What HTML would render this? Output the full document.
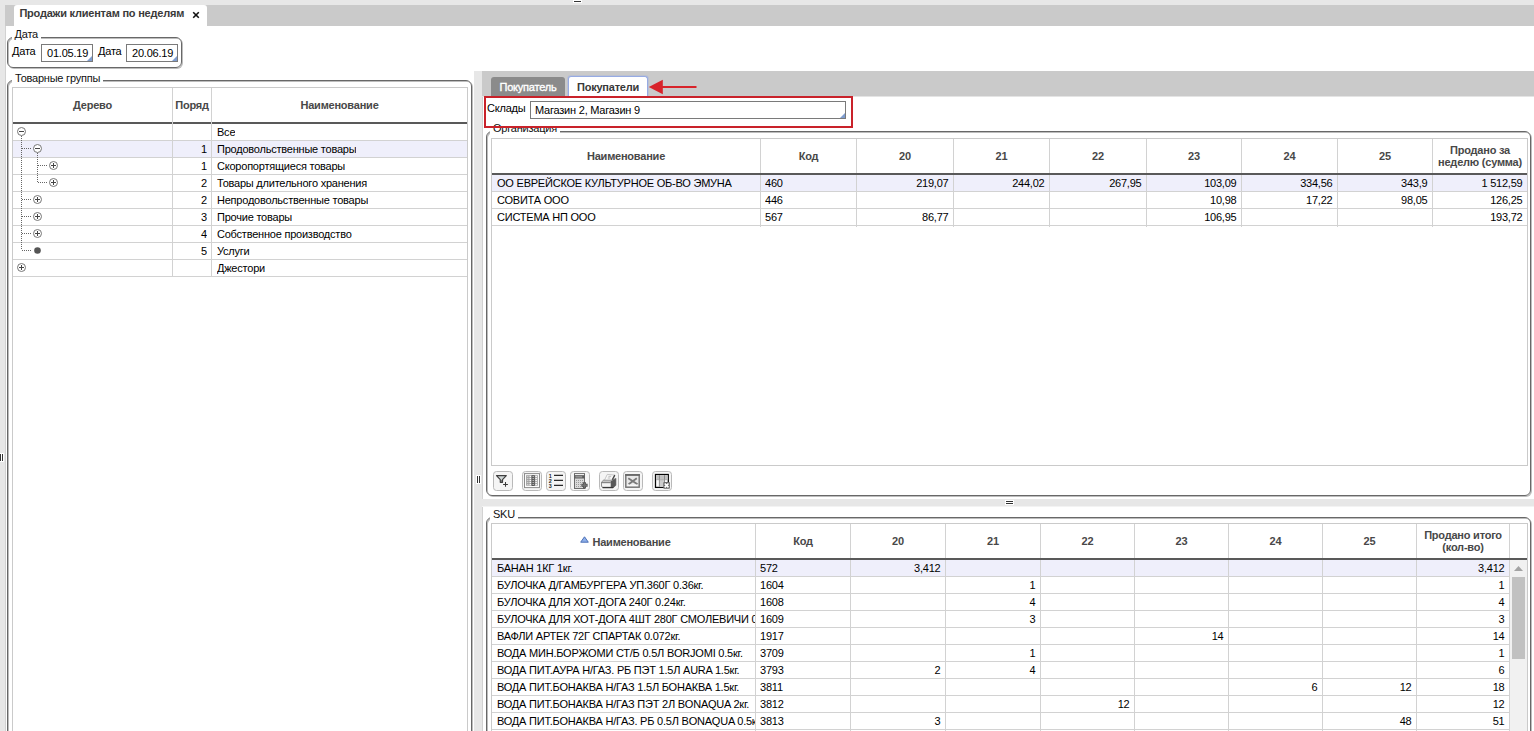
<!DOCTYPE html><html lang="ru"><head><meta charset="utf-8"><title>Продажи клиентам по неделям</title><style>
*{box-sizing:border-box;margin:0;padding:0}
html,body{width:1534px;height:731px;overflow:hidden;background:#e7e7e7}
body{font-family:"Liberation Sans",sans-serif;font-size:11px;color:#000;letter-spacing:-0.22px;position:relative}
.abs,.abs>*{position:absolute}
div{position:absolute;white-space:nowrap}
.fs{border:1px solid #686868;border-radius:6px;box-shadow:1px 1px 0 0 rgba(90,90,90,.4),inset 1px 1px 0 0 rgba(90,90,90,.4)}
.lg{background:#fff;padding:0 3px;font-size:11px;line-height:13px;color:#111}
.grid{border:1px solid #cacaca;background:#fff;overflow:hidden}
.hl{height:1px;background:#d2d2d2;left:0;right:0}
.vl{width:1px;background:#d2d2d2;top:0}
.hb{height:2px;background:#595959;left:0;right:0}
.th{font-weight:bold;color:#484848;text-align:center;font-size:11px;line-height:13px}
.c{line-height:17px;height:17px;overflow:hidden}
.r{text-align:right}
.sel{background:#efeffb;left:0;right:0;height:17px}
.btn{width:20px;height:20px;border:1px solid #b9b9b9;border-radius:3.500px;background:#f5f5f5}
.inp{border:1px solid #7a7a7a;background:#fff;line-height:16px;padding-left:5px;font-size:11px}
.tri{width:0;height:0;border-left:5px solid transparent;border-bottom:5px solid #7f9dcf;right:0;bottom:0}
</style></head><body>
<div style="left:5px;top:5px;width:1529px;height:21px;background:#cacaca"></div>
<div style="left:5px;top:26px;width:1529px;height:705px;background:#fff"></div>
<div style="left:14px;top:5px;width:193px;height:21px;background:#fff;border-radius:3px 3px 0 0"></div>
<div style="left:19.400px;top:7px;font-weight:bold;font-size:11px;line-height:13px;color:#3a3a3a">Продажи клиентам по неделям</div>
<svg style="position:absolute;left:192px;top:11.400px" width="8" height="8" viewBox="0 0 8 8"><path d="M1.200 1.200L6.800 6.800M6.800 1.200L1.200 6.800" stroke="#111" stroke-width="1.600"/></svg>
<div style="left:5px;top:26px;width:1px;height:705px;background:#d2d2d2"></div>
<div class="fs" style="left:7px;top:37px;width:175px;height:31px"></div>
<div class="lg" style="left:11.500px;top:28px">Дата</div>
<div style="left:12px;top:45px;line-height:13px">Дата</div>
<div class="inp" style="left:41px;top:44px;width:52px;height:18px">01.05.19<div class="tri"></div></div>
<div style="left:98px;top:45px;line-height:13px">Дата</div>
<div class="inp" style="left:126px;top:44px;width:52px;height:18px">20.06.19<div class="tri"></div></div>
<div class="fs" style="left:7px;top:80px;width:465px;height:670px"></div>
<div class="lg" style="left:12px;top:72px">Товарные группы</div>
<div class="grid" style="left:12px;top:87px;width:456px;height:660px">
<div class="vl" style="left:159px;height:189px"></div>
<div class="vl" style="left:198px;height:189px"></div>
<div class="th" style="left:0;width:159px;top:11px">Дерево</div>
<div class="th" style="left:160px;width:38px;top:11px">Поряд</div>
<div class="th" style="left:199px;width:255px;top:11px">Наименование</div>
<div class="hb" style="top:34px"></div>
<div class="hl" style="top:52px"></div>
<div class="c r" style="left:160px;width:34px;top:36px"></div>
<div class="c" style="left:204px;top:36px">Все</div>
<div class="sel" style="top:53px"></div>
<div class="hl" style="top:69px"></div>
<div class="c r" style="left:160px;width:34px;top:53px">1</div>
<div class="c" style="left:204px;top:53px">Продовольственные товары</div>
<div class="hl" style="top:86px"></div>
<div class="c r" style="left:160px;width:34px;top:70px">1</div>
<div class="c" style="left:204px;top:70px">Скоропортящиеся товары</div>
<div class="hl" style="top:103px"></div>
<div class="c r" style="left:160px;width:34px;top:87px">2</div>
<div class="c" style="left:204px;top:87px">Товары длительного хранения</div>
<div class="hl" style="top:120px"></div>
<div class="c r" style="left:160px;width:34px;top:104px">2</div>
<div class="c" style="left:204px;top:104px">Непродовольственные товары</div>
<div class="hl" style="top:137px"></div>
<div class="c r" style="left:160px;width:34px;top:121px">3</div>
<div class="c" style="left:204px;top:121px">Прочие товары</div>
<div class="hl" style="top:154px"></div>
<div class="c r" style="left:160px;width:34px;top:138px">4</div>
<div class="c" style="left:204px;top:138px">Собственное производство</div>
<div class="hl" style="top:171px"></div>
<div class="c r" style="left:160px;width:34px;top:155px">5</div>
<div class="c" style="left:204px;top:155px">Услуги</div>
<div class="hl" style="top:188px"></div>
<div class="c r" style="left:160px;width:34px;top:172px"></div>
<div class="c" style="left:204px;top:172px">Джестори</div>
<div class="vl" style="left:159px;height:189px"></div>
<div class="vl" style="left:198px;height:189px"></div>
<svg style="position:absolute;left:0;top:0" width="160" height="200" viewBox="13 88 160 200" shape-rendering="crispEdges">
<path d="M21.5 136V250" stroke="#666" stroke-width="1" stroke-dasharray="1 1"/>
<path d="M37.5 153V182" stroke="#666" stroke-width="1" stroke-dasharray="1 1"/>
<path d="M22 148.5H31" stroke="#666" stroke-width="1" stroke-dasharray="1 1"/>
<path d="M22 199.5H31" stroke="#666" stroke-width="1" stroke-dasharray="1 1"/>
<path d="M22 216.5H31" stroke="#666" stroke-width="1" stroke-dasharray="1 1"/>
<path d="M22 233.5H31" stroke="#666" stroke-width="1" stroke-dasharray="1 1"/>
<path d="M22 250.5H31" stroke="#666" stroke-width="1" stroke-dasharray="1 1"/>
<path d="M38 165.5H47" stroke="#666" stroke-width="1" stroke-dasharray="1 1"/>
<path d="M38 182.5H47" stroke="#666" stroke-width="1" stroke-dasharray="1 1"/>
</svg>
<svg style="position:absolute;left:3px;top:38px" width="11" height="11" viewBox="0 0 11 11"><circle cx="5.5" cy="5.5" r="4" fill="#fff" stroke="#777" stroke-width="1"/><path d="M3 5.5H8" stroke="#444" stroke-width="1"/></svg>
<svg style="position:absolute;left:19px;top:55px" width="11" height="11" viewBox="0 0 11 11"><circle cx="5.5" cy="5.5" r="4" fill="#fff" stroke="#777" stroke-width="1"/><path d="M3 5.5H8" stroke="#444" stroke-width="1"/></svg>
<svg style="position:absolute;left:35px;top:72px" width="11" height="11" viewBox="0 0 11 11"><circle cx="5.5" cy="5.5" r="4" fill="#fff" stroke="#777" stroke-width="1"/><path d="M3 5.5H8" stroke="#444" stroke-width="1"/><path d="M5.5 3V8" stroke="#444" stroke-width="1"/></svg>
<svg style="position:absolute;left:35px;top:89px" width="11" height="11" viewBox="0 0 11 11"><circle cx="5.5" cy="5.5" r="4" fill="#fff" stroke="#777" stroke-width="1"/><path d="M3 5.5H8" stroke="#444" stroke-width="1"/><path d="M5.5 3V8" stroke="#444" stroke-width="1"/></svg>
<svg style="position:absolute;left:19px;top:106px" width="11" height="11" viewBox="0 0 11 11"><circle cx="5.5" cy="5.5" r="4" fill="#fff" stroke="#777" stroke-width="1"/><path d="M3 5.5H8" stroke="#444" stroke-width="1"/><path d="M5.5 3V8" stroke="#444" stroke-width="1"/></svg>
<svg style="position:absolute;left:19px;top:123px" width="11" height="11" viewBox="0 0 11 11"><circle cx="5.5" cy="5.5" r="4" fill="#fff" stroke="#777" stroke-width="1"/><path d="M3 5.5H8" stroke="#444" stroke-width="1"/><path d="M5.5 3V8" stroke="#444" stroke-width="1"/></svg>
<svg style="position:absolute;left:19px;top:140px" width="11" height="11" viewBox="0 0 11 11"><circle cx="5.5" cy="5.5" r="4" fill="#fff" stroke="#777" stroke-width="1"/><path d="M3 5.5H8" stroke="#444" stroke-width="1"/><path d="M5.5 3V8" stroke="#444" stroke-width="1"/></svg>
<svg style="position:absolute;left:19px;top:157px" width="11" height="11" viewBox="0 0 11 11"><circle cx="5.5" cy="5.5" r="3.3" fill="#555"/></svg>
<svg style="position:absolute;left:3px;top:174px" width="11" height="11" viewBox="0 0 11 11"><circle cx="5.5" cy="5.5" r="4" fill="#fff" stroke="#777" stroke-width="1"/><path d="M3 5.5H8" stroke="#444" stroke-width="1"/><path d="M5.5 3V8" stroke="#444" stroke-width="1"/></svg>
</div>
<div style="left:474px;top:71px;width:8px;height:660px;background:#e7e7e7"></div>
<div style="left:476px;top:475px;width:5px;height:9px;background:#fff"></div>
<div style="left:477px;top:476px;width:1px;height:7px;background:#333"></div>
<div style="left:479px;top:476px;width:1px;height:7px;background:#333"></div>
<div style="left:0px;top:453px;width:4px;height:9px;background:#fff"></div>
<div style="left:0px;top:454px;width:1px;height:7px;background:#333"></div>
<div style="left:2px;top:454px;width:1px;height:7px;background:#333"></div>
<div style="left:482px;top:97px;width:1px;height:402px;background:#d2d2d2"></div>
<div style="left:482px;top:506px;width:1px;height:225px;background:#d2d2d2"></div>
<div style="left:482px;top:71px;width:1052px;height:26px;background:#e4e4e4"></div>
<div style="left:482px;top:71px;width:1052px;height:25px;background:#cacaca"></div>
<div style="left:491px;top:77px;width:74px;height:19px;background:#8b8b8b;border-radius:3px 3px 0 0;color:#fff;-webkit-text-stroke:0.350px #fff;text-align:center;line-height:20px;font-size:11px">Покупатель</div>
<div style="left:568px;top:76px;width:80px;height:21px;background:#fff;border:1px solid #97abe3;border-bottom:none;box-shadow:0 0 0 1px rgba(151,171,227,.3);border-radius:3px 3px 0 0;color:#383838;font-weight:bold;text-align:center;line-height:20px;font-size:11px">Покупатели</div>
<svg style="position:absolute;left:648px;top:78px" width="52" height="18" viewBox="0 0 52 18"><path d="M13 9H48.500" stroke="#d8232a" stroke-width="1.800"/><path d="M0.800 9L14.800 1.800V16.200Z" fill="#d8232a"/></svg>
<div style="left:484px;top:96px;width:369px;height:32px;border:2px solid #c9222a"></div>
<div style="left:487px;top:102px;line-height:13px">Склады</div>
<div class="inp" style="left:530px;top:101px;width:316px;height:18px;line-height:16px;padding-left:4px">Магазин 2, Магазин 9<div class="tri"></div></div>
<div class="fs" style="left:486px;top:131px;width:1045px;height:365px"></div>
<div class="lg" style="left:490px;top:122px">Организация</div>
<div style="left:484px;top:126px;width:369px;height:2px;background:#c9222a"></div>
<div class="grid" style="left:491px;top:138px;width:1037px;height:328px">
<div class="sel" style="top:36px"></div>
<div class="vl" style="left:268px;height:88px"></div>
<div class="vl" style="left:364px;height:88px"></div>
<div class="vl" style="left:461px;height:88px"></div>
<div class="vl" style="left:557px;height:88px"></div>
<div class="vl" style="left:654px;height:88px"></div>
<div class="vl" style="left:749px;height:88px"></div>
<div class="vl" style="left:845px;height:88px"></div>
<div class="vl" style="left:940px;height:88px"></div>
<div class="th" style="left:0px;width:268px;top:11px;line-height:13px;white-space:normal;">Наименование</div>
<div class="th" style="left:269px;width:95px;top:11px;line-height:13px;white-space:normal;">Код</div>
<div class="th" style="left:365px;width:96px;top:11px;line-height:13px;white-space:normal;">20</div>
<div class="th" style="left:462px;width:95px;top:11px;line-height:13px;white-space:normal;">21</div>
<div class="th" style="left:558px;width:96px;top:11px;line-height:13px;white-space:normal;">22</div>
<div class="th" style="left:655px;width:94px;top:11px;line-height:13px;white-space:normal;">23</div>
<div class="th" style="left:750px;width:95px;top:11px;line-height:13px;white-space:normal;">24</div>
<div class="th" style="left:846px;width:94px;top:11px;line-height:13px;white-space:normal;">25</div>
<div class="th" style="left:941px;width:94px;top:4.8px;line-height:12px;white-space:normal;">Продано за<br>неделю (сумма)</div>
<div class="hb" style="top:34px"></div>
<div class="hl" style="top:52px"></div>
<div class="c" style="left:5px;width:263px;top:36px">ОО ЕВРЕЙСКОЕ КУЛЬТУРНОЕ ОБ-ВО ЭМУНА</div>
<div class="c" style="left:273px;width:91px;top:36px">460</div>
<div class="c r" style="left:365px;width:91.5px;top:36px">219,07</div>
<div class="c r" style="left:462px;width:90.5px;top:36px">244,02</div>
<div class="c r" style="left:558px;width:91.5px;top:36px">267,95</div>
<div class="c r" style="left:655px;width:89.5px;top:36px">103,09</div>
<div class="c r" style="left:750px;width:90.5px;top:36px">334,56</div>
<div class="c r" style="left:846px;width:89.5px;top:36px">343,9</div>
<div class="c r" style="left:941px;width:89.5px;top:36px">1 512,59</div>
<div class="hl" style="top:69px"></div>
<div class="c" style="left:5px;width:263px;top:53px">СОВИТА ООО</div>
<div class="c" style="left:273px;width:91px;top:53px">446</div>
<div class="c r" style="left:655px;width:89.5px;top:53px">10,98</div>
<div class="c r" style="left:750px;width:90.5px;top:53px">17,22</div>
<div class="c r" style="left:846px;width:89.5px;top:53px">98,05</div>
<div class="c r" style="left:941px;width:89.5px;top:53px">126,25</div>
<div class="hl" style="top:86px"></div>
<div class="c" style="left:5px;width:263px;top:70px">СИСТЕМА НП ООО</div>
<div class="c" style="left:273px;width:91px;top:70px">567</div>
<div class="c r" style="left:365px;width:91.5px;top:70px">86,77</div>
<div class="c r" style="left:655px;width:89.5px;top:70px">106,95</div>
<div class="c r" style="left:941px;width:89.5px;top:70px">193,72</div>
</div>
<div class="btn" style="left:493px;top:471px"><svg style="position:absolute;left:0;top:0" width="18" height="18" viewBox="0 0 18 18"><path d="M2.500 3.600H12.300L8.500 7.600V10.300H6.300V7.600Z" fill="#cfd6d6" stroke="#3f3f3f" stroke-width="1.200" stroke-linejoin="round"/><path d="M6.900 8.200H7.900V9.800H6.900Z" fill="#555"/><path d="M9.100 12.400H13.900M11.500 10V14.800" stroke="#3a3a3a" stroke-width="1.050"/></svg></div>
<div class="btn" style="left:522px;top:471px"><svg style="position:absolute;left:0;top:0" width="18" height="18" viewBox="0 0 18 18"><rect x="1.500" y="1.600" width="15" height="14" fill="#fcfcfc" stroke="#8c8c8c" stroke-width="1"/><rect x="3.100" y="3.200" width="11.700" height="10.500" fill="#9e9e9e"/><rect x="8.600" y="3.200" width="3.100" height="10.800" fill="#4c4c4c"/><rect x="3.900" y="3.900" width="1.600" height="1.200" fill="#cfcfcf"/><rect x="3.900" y="5.900" width="1.600" height="1.200" fill="#cfcfcf"/><rect x="3.900" y="7.900" width="1.600" height="1.200" fill="#cfcfcf"/><rect x="3.900" y="9.900" width="1.600" height="1.200" fill="#cfcfcf"/><rect x="3.900" y="11.900" width="1.600" height="1.200" fill="#cfcfcf"/><rect x="6.500" y="3.900" width="1.600" height="1.200" fill="#fdfdfd"/><rect x="6.500" y="5.900" width="1.600" height="1.200" fill="#fdfdfd"/><rect x="6.500" y="7.900" width="1.600" height="1.200" fill="#fdfdfd"/><rect x="6.500" y="9.900" width="1.600" height="1.200" fill="#fdfdfd"/><rect x="6.500" y="11.900" width="1.600" height="1.200" fill="#fdfdfd"/><rect x="9.400" y="3.900" width="1.600" height="1.200" fill="#b4b4b4"/><rect x="9.400" y="5.900" width="1.600" height="1.200" fill="#b4b4b4"/><rect x="9.400" y="7.900" width="1.600" height="1.200" fill="#b4b4b4"/><rect x="9.400" y="9.900" width="1.600" height="1.200" fill="#b4b4b4"/><rect x="9.400" y="11.900" width="1.600" height="1.200" fill="#b4b4b4"/><rect x="12.300" y="3.900" width="1.600" height="1.200" fill="#fdfdfd"/><rect x="12.300" y="5.900" width="1.600" height="1.200" fill="#fdfdfd"/><rect x="12.300" y="7.900" width="1.600" height="1.200" fill="#fdfdfd"/><rect x="12.300" y="9.900" width="1.600" height="1.200" fill="#fdfdfd"/><rect x="12.300" y="11.900" width="1.600" height="1.200" fill="#fdfdfd"/></svg></div>
<div class="btn" style="left:546px;top:471px"><svg style="position:absolute;left:0;top:0" width="18" height="18" viewBox="0 0 18 18"><path d="M7 3.400H16M7 8.400H16M7 13.400H16" stroke="#2a2a2a" stroke-width="1.200"/><text x="1.700" y="5.700" font-size="5.400" font-weight="bold" fill="#1c1c1c" font-family="Liberation Sans,sans-serif">1</text><text x="1.700" y="10.800" font-size="5.400" font-weight="bold" fill="#1c1c1c" font-family="Liberation Sans,sans-serif">2</text><text x="1.700" y="15.900" font-size="5.400" font-weight="bold" fill="#1c1c1c" font-family="Liberation Sans,sans-serif">3</text></svg></div>
<div class="btn" style="left:570px;top:471px"><svg style="position:absolute;left:0;top:0" width="18" height="18" viewBox="0 0 18 18"><rect x="3.500" y="1.600" width="10" height="14.900" fill="#dadada" stroke="#6c6c6c" stroke-width="1"/><rect x="4" y="2.100" width="9" height="1.100" fill="#f4f4f4"/><rect x="3.300" y="3.200" width="10.400" height="3.300" fill="#5c5c5c"/><rect x="4.400" y="4" width="6.800" height="1.600" fill="#959595"/><rect x="5.000" y="8.000" width="1" height="1" fill="#9a9a9a"/><rect x="5.000" y="10.000" width="1" height="1" fill="#9a9a9a"/><rect x="5.000" y="12.000" width="1" height="1" fill="#9a9a9a"/><rect x="5.000" y="14.000" width="1" height="1" fill="#9a9a9a"/><rect x="7.000" y="8.000" width="1" height="1" fill="#9a9a9a"/><rect x="7.000" y="10.000" width="1" height="1" fill="#9a9a9a"/><rect x="7.000" y="12.000" width="1" height="1" fill="#9a9a9a"/><rect x="7.000" y="14.000" width="1" height="1" fill="#9a9a9a"/><rect x="9.000" y="8.000" width="1" height="1" fill="#9a9a9a"/><rect x="9.000" y="10.000" width="1" height="1" fill="#9a9a9a"/><rect x="9.000" y="12.000" width="1" height="1" fill="#9a9a9a"/><rect x="9.000" y="14.000" width="1" height="1" fill="#9a9a9a"/><rect x="11.000" y="8.000" width="1" height="1" fill="#9a9a9a"/><rect x="11.000" y="10.000" width="1" height="1" fill="#9a9a9a"/><rect x="11.000" y="12.000" width="1" height="1" fill="#9a9a9a"/><rect x="11.000" y="14.000" width="1" height="1" fill="#9a9a9a"/><path d="M10.400 13.300H16.600M13.500 10.200V16.400" stroke="#4c4c4c" stroke-width="2.900" stroke-linejoin="round"/><path d="M11 13.300H16M13.500 10.800V15.800" stroke="#727272" stroke-width="1.600"/></svg></div>
<div class="btn" style="left:599px;top:471px"><svg style="position:absolute;left:0;top:0" width="18" height="18" viewBox="0 0 18 18"><path d="M1.500 10L3.800 8H12.500L15.900 6.300V13.300L13.300 15.700H2.600L1.500 14.300Z" fill="#c4c4c4" stroke="#7a7a7a" stroke-width="0.800"/><path d="M10.700 9.300L15.900 6.500V13.300L13.300 15.700H10.700Z" fill="#585858"/><path d="M2 11.200H10.500V14.600H3L2 13.600Z" fill="#f4f4f4"/><path d="M1.800 10.600H10.600" stroke="#777" stroke-width="0.900"/><path d="M2.600 15.600H13.200" stroke="#333" stroke-width="1.100"/><path d="M4.600 7.900L7.300 2.400L14.800 3.100L12.100 7.900Z" fill="#fafafa" stroke="#b0b0b0" stroke-width="0.700"/><path d="M14.800 3.100L12.300 7.700" stroke="#444" stroke-width="1.300"/><path d="M8.400 4.300H11.200M7.700 6H10.300" stroke="#aaa" stroke-width="0.800"/></svg></div>
<div class="btn" style="left:623px;top:471px"><svg style="position:absolute;left:0;top:0" width="18" height="18" viewBox="0 0 18 18"><rect x="1.800" y="2.900" width="13.400" height="12.300" fill="#e9e9e9" stroke="#727272" stroke-width="1.400"/><path d="M1.100 2.900H15.900" stroke="#6a6a6a" stroke-width="1.800"/><path d="M4.300 6.300L13.500 12.300M12.800 6.300L4.600 12.300" stroke="#7a7a7a" stroke-width="1.900"/><path d="M3.500 13.300H13.500" stroke="#fafafa" stroke-width="1.200"/></svg></div>
<div class="btn" style="left:652px;top:471px"><svg style="position:absolute;left:0;top:0" width="18" height="18" viewBox="0 0 18 18"><rect x="2.500" y="2.500" width="12.800" height="12.900" fill="#fbfbfb" stroke="#050505" stroke-width="1.250"/><rect x="3.200" y="3.200" width="11.400" height="4.300" fill="#c2c2c2"/><rect x="6.900" y="7.900" width="4.200" height="7" fill="#cdcdcd"/><path d="M6.400 3.200V14.800M11.500 3.200V10" stroke="#858585" stroke-width="0.900"/><path d="M3.200 7.700H14.600" stroke="#9a9a9a" stroke-width="0.700"/><rect x="10.300" y="10.100" width="6.600" height="6.600" rx="0.800" fill="#6c6c6c"/><path d="M11.700 11.500L15.500 15.300M15.500 11.500L11.700 15.300" stroke="#fff" stroke-width="1.700"/></svg></div>
<div style="left:482px;top:499px;width:1052px;height:8px;background:#e7e7e7;border-bottom:1px solid #f3f3f3"></div>
<div style="left:1005px;top:500px;width:9px;height:5px;background:#fff"></div>
<div style="left:1006px;top:501px;width:7px;height:1px;background:#333"></div>
<div style="left:1006px;top:503px;width:7px;height:1px;background:#333"></div>
<div style="left:573px;top:0px;width:9px;height:3px;background:#fff"></div>
<div style="left:574px;top:1px;width:7px;height:1px;background:#333"></div>
<div class="fs" style="left:486px;top:517px;width:1045px;height:240px"></div>
<div class="lg" style="left:490px;top:508px">SKU</div>
<div class="grid" style="left:491px;top:523px;width:1037px;height:230px">
<div class="sel" style="top:36px"></div>
<div class="vl" style="left:263px;height:224px"></div>
<div class="vl" style="left:358px;height:224px"></div>
<div class="vl" style="left:453px;height:224px"></div>
<div class="vl" style="left:548px;height:224px"></div>
<div class="vl" style="left:642px;height:224px"></div>
<div class="vl" style="left:736px;height:224px"></div>
<div class="vl" style="left:830px;height:224px"></div>
<div class="vl" style="left:924px;height:224px"></div>
<div class="vl" style="left:1017px;height:224px"></div>
<div class="th" style="left:0px;width:263px;top:12px;line-height:13px;white-space:normal;padding-left:16px;">Наименование</div>
<div class="th" style="left:264px;width:94px;top:11px;line-height:13px;white-space:normal;">Код</div>
<div class="th" style="left:359px;width:94px;top:11px;line-height:13px;white-space:normal;">20</div>
<div class="th" style="left:454px;width:94px;top:11px;line-height:13px;white-space:normal;">21</div>
<div class="th" style="left:549px;width:93px;top:11px;line-height:13px;white-space:normal;">22</div>
<div class="th" style="left:643px;width:93px;top:11px;line-height:13px;white-space:normal;">23</div>
<div class="th" style="left:737px;width:93px;top:11px;line-height:13px;white-space:normal;">24</div>
<div class="th" style="left:831px;width:93px;top:11px;line-height:13px;white-space:normal;">25</div>
<div class="th" style="left:925px;width:92px;top:4.8px;line-height:12px;white-space:normal;">Продано итого<br>(кол-во)</div>
<div class="th" style="left:1018px;width:17px;top:11px;line-height:13px;white-space:normal;"></div>
<div class="hb" style="top:34px"></div>
<div class="hl" style="top:52px"></div>
<div class="c" style="left:5px;width:258px;top:36px">БАНАН 1КГ 1кг.</div>
<div class="c" style="left:268px;width:90px;top:36px">572</div>
<div class="c r" style="left:359px;width:89.5px;top:36px">3,412</div>
<div class="c r" style="left:925px;width:87.5px;top:36px">3,412</div>
<div class="hl" style="top:69px"></div>
<div class="c" style="left:5px;width:258px;top:53px">БУЛОЧКА Д/ГАМБУРГЕРА УП.360Г 0.36кг.</div>
<div class="c" style="left:268px;width:90px;top:53px">1604</div>
<div class="c r" style="left:454px;width:89.5px;top:53px">1</div>
<div class="c r" style="left:925px;width:87.5px;top:53px">1</div>
<div class="hl" style="top:86px"></div>
<div class="c" style="left:5px;width:258px;top:70px">БУЛОЧКА ДЛЯ ХОТ-ДОГА 240Г 0.24кг.</div>
<div class="c" style="left:268px;width:90px;top:70px">1608</div>
<div class="c r" style="left:454px;width:89.5px;top:70px">4</div>
<div class="c r" style="left:925px;width:87.5px;top:70px">4</div>
<div class="hl" style="top:103px"></div>
<div class="c" style="left:5px;width:258px;top:87px">БУЛОЧКА ДЛЯ ХОТ-ДОГА 4ШТ 280Г СМОЛЕВИЧИ 0.28кг.</div>
<div class="c" style="left:268px;width:90px;top:87px">1609</div>
<div class="c r" style="left:454px;width:89.5px;top:87px">3</div>
<div class="c r" style="left:925px;width:87.5px;top:87px">3</div>
<div class="hl" style="top:120px"></div>
<div class="c" style="left:5px;width:258px;top:104px">ВАФЛИ АРТЕК 72Г СПАРТАК 0.072кг.</div>
<div class="c" style="left:268px;width:90px;top:104px">1917</div>
<div class="c r" style="left:643px;width:88.5px;top:104px">14</div>
<div class="c r" style="left:925px;width:87.5px;top:104px">14</div>
<div class="hl" style="top:137px"></div>
<div class="c" style="left:5px;width:258px;top:121px">ВОДА МИН.БОРЖОМИ СТ/Б 0.5Л BORJOMI 0.5кг.</div>
<div class="c" style="left:268px;width:90px;top:121px">3709</div>
<div class="c r" style="left:454px;width:89.5px;top:121px">1</div>
<div class="c r" style="left:925px;width:87.5px;top:121px">1</div>
<div class="hl" style="top:154px"></div>
<div class="c" style="left:5px;width:258px;top:138px">ВОДА ПИТ.АУРА Н/ГАЗ. РБ ПЭТ 1.5Л AURA 1.5кг.</div>
<div class="c" style="left:268px;width:90px;top:138px">3793</div>
<div class="c r" style="left:359px;width:89.5px;top:138px">2</div>
<div class="c r" style="left:454px;width:89.5px;top:138px">4</div>
<div class="c r" style="left:925px;width:87.5px;top:138px">6</div>
<div class="hl" style="top:171px"></div>
<div class="c" style="left:5px;width:258px;top:155px">ВОДА ПИТ.БОНАКВА Н/ГАЗ 1.5Л БОНАКВА 1.5кг.</div>
<div class="c" style="left:268px;width:90px;top:155px">3811</div>
<div class="c r" style="left:737px;width:88.5px;top:155px">6</div>
<div class="c r" style="left:831px;width:88.5px;top:155px">12</div>
<div class="c r" style="left:925px;width:87.5px;top:155px">18</div>
<div class="hl" style="top:188px"></div>
<div class="c" style="left:5px;width:258px;top:172px">ВОДА ПИТ.БОНАКВА Н/ГАЗ ПЭТ 2Л BONAQUA 2кг.</div>
<div class="c" style="left:268px;width:90px;top:172px">3812</div>
<div class="c r" style="left:549px;width:88.5px;top:172px">12</div>
<div class="c r" style="left:925px;width:87.5px;top:172px">12</div>
<div class="hl" style="top:205px"></div>
<div class="c" style="left:5px;width:258px;top:189px">ВОДА ПИТ.БОНАКВА Н/ГАЗ. РБ 0.5Л BONAQUA 0.5кг.</div>
<div class="c" style="left:268px;width:90px;top:189px">3813</div>
<div class="c r" style="left:359px;width:89.5px;top:189px">3</div>
<div class="c r" style="left:831px;width:88.5px;top:189px">48</div>
<div class="c r" style="left:925px;width:87.5px;top:189px">51</div>
<div class="hl" style="top:222px"></div>
<div style="left:1018px;top:36px;width:17px;height:200px;background:#f1f1f1"></div>
<div style="left:1020px;top:53px;width:13px;height:82px;background:#c1c1c1"></div>
<svg style="position:absolute;left:1022px;top:42px" width="9" height="5" viewBox="0 0 9 5"><path d="M0 5L4.500 0L9 5Z" fill="#a3a3a3"/></svg>
<svg style="position:absolute;left:88px;top:12px" width="9" height="7" viewBox="0 0 9 7"><path d="M4.500 0.800L8.300 6.200H0.700Z" fill="#8fb0ea" stroke="#4a6fb5" stroke-width="1"/></svg>
</div>
</body></html>
